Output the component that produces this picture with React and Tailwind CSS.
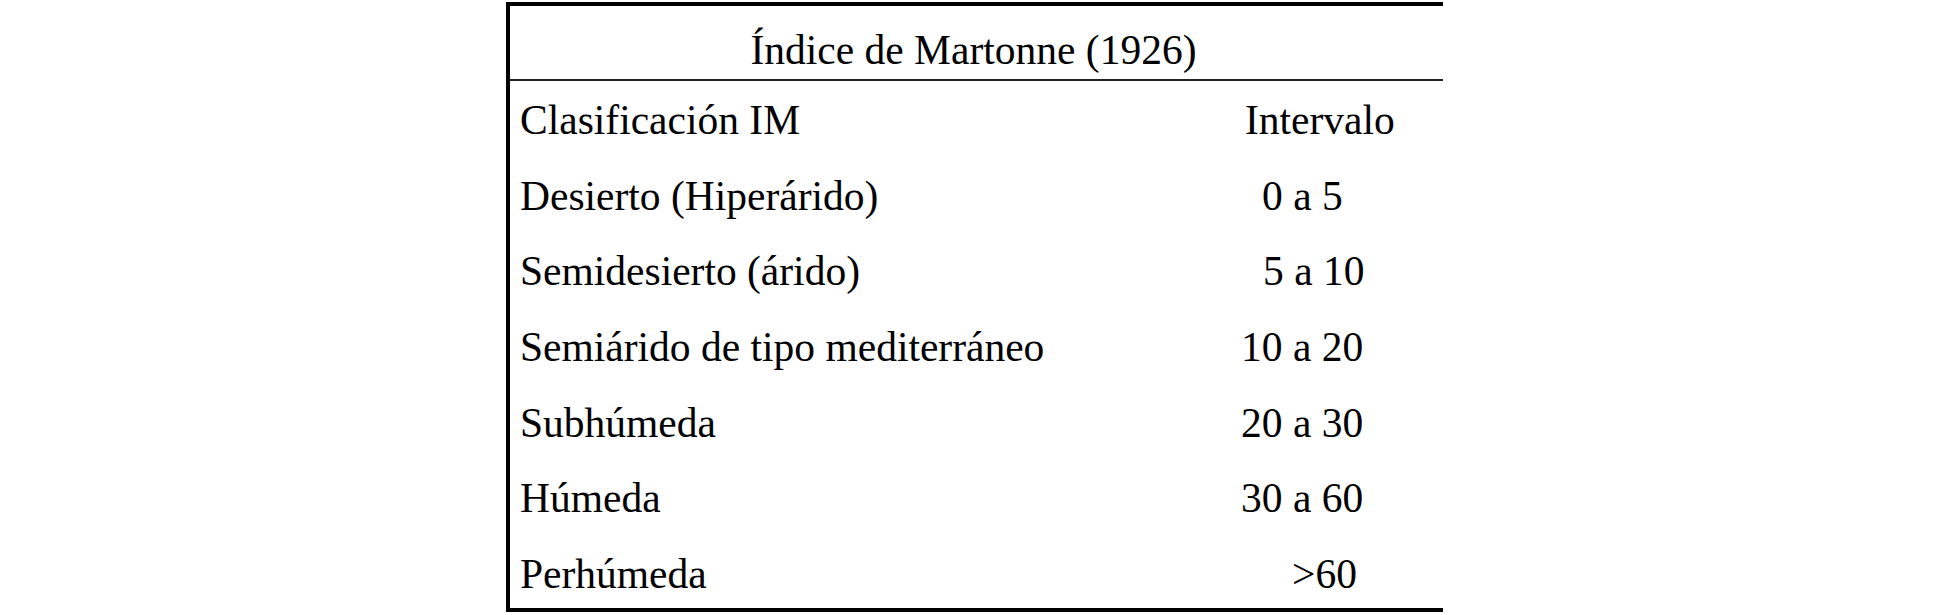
const rows = [
  { label: "Clasificación IM", value: "Intervalo", pad: "pl-[4px]" },
  { label: "Desierto (Hiperárido)", value: "0 a 5", pad: "pl-[21px]" },
  { label: "Semidesierto (árido)", value: "5 a 10", pad: "pl-[22px]" },
  { label: "Semiárido de tipo mediterráneo", value: "10 a 20", pad: "pl-0" },
  { label: "Subhúmeda", value: "20 a 30", pad: "pl-0" },
  { label: "Húmeda", value: "30 a 60", pad: "pl-0" },
  { label: "Perhúmeda", value: ">60", pad: "pl-[51px]" },
];

export default function App() {
  return (
    <div
      className="w-[1951px] h-[615px] bg-white pl-[506px] pt-[2px] text-black"
      style={{ fontFamily: '"Liberation Serif", "Times New Roman", serif' }}
    >
      <div className="w-[937px] border-l-4 border-t-4 border-b-4 border-black">
        {/* Title */}
        <div className="h-[75px] border-b-2 border-[#222] pt-[21px] pr-[6px] text-center text-[41.5px] leading-[46px]">
          Índice de Martonne (1926)
        </div>

        {/* Body */}
        <div className="pt-[1px] text-[41.5px]">
          {rows.map((row, i) => (
            <div
              key={row.label}
              className={`grid grid-cols-[731px_1fr] leading-[76px] whitespace-nowrap ${
                i === rows.length - 1 ? "h-[72px]" : "h-[75.67px]"
              }`}
            >
              <div className="pl-[10px]">{row.label}</div>
              <div className={row.pad}>{row.value}</div>
            </div>
          ))}
        </div>
      </div>
    </div>
  );
}
